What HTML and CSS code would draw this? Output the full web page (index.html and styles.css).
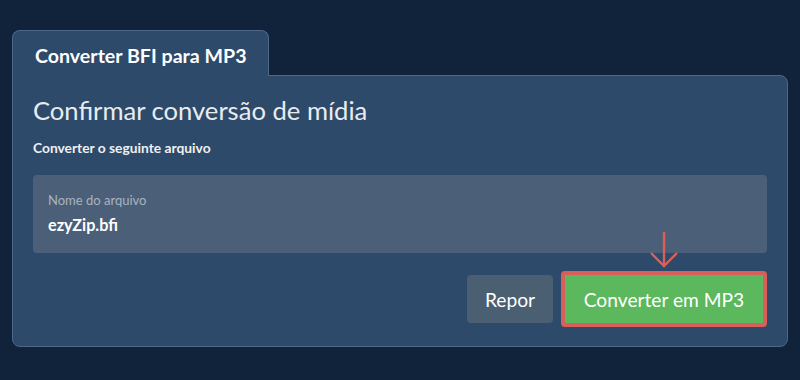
FILE: index.html
```html
<!DOCTYPE html>
<html lang="pt">
<head>
<meta charset="utf-8">
<link rel="stylesheet" href="styles.css">
</head>
<body>
<div class="wrap">
  <div class="tab">Converter BFI para MP3</div>
  <div class="panel">
    <h1 class="title">Confirmar conversão de mídia</h1>
    <p class="sub">Converter o seguinte arquivo</p>
    <div class="field">
      <div class="label">Nome do arquivo</div>
      <div class="value">ezyZip.bfi</div>
    </div>
    <div class="actions">
      <button class="btn reset">Repor</button>
      <div class="convert-wrap">
        <svg class="arrow" width="30" height="36" viewBox="0 0 30 36">
          <path d="M15 0 V34 M2 21 L15 34 L28 21" fill="none" stroke="#d9605a" stroke-width="2.4"/>
        </svg>
        <div class="highlight"><button class="btn convert">Converter em MP3</button></div>
      </div>
    </div>
  </div>
</div>
</body>
</html>
```

FILE: styles.css
```css
html, body { margin: 0; padding: 0; }
body {
  background: #10233a;
  font-family: Lato, "Open Sans", sans-serif;
  width: 800px; height: 380px; overflow: hidden;
}
.wrap { padding: 30px 12px 0 12px; }
.tab {
  width: 257px;
  height: 46px;
  box-sizing: border-box;
  background: #2d4a6a;
  border: 1px solid #4d6888;
  border-bottom: none;
  border-radius: 8px 8px 0 0;
  color: #fff;
  font-weight: 700;
  font-size: 19.6px;
  padding: 14px 0 0 22px;
  line-height: 22px;
  position: relative;
  z-index: 1;
  margin-bottom: -1px;
}
.panel {
  width: 776px;
  height: 272px;
  box-sizing: border-box;
  background: #2d4a6a;
  border: 1px solid #4d6888;
  border-radius: 0 8px 8px 8px;
  padding: 0 20px 0 20px;
  display: flex; flex-direction: column;
}
.title {
  margin: 19px 0 0 0;
  font-weight: 400;
  font-size: 25.6px;
  line-height: 30px;
  color: #e9ecef;
}
.sub {
  margin: 14px 0 0 0;
  font-weight: 700;
  font-size: 13.8px;
  line-height: 18px;
  color: #eef0f2;
}
.field {
  margin-top: 18px;
  height: 78px;
  box-sizing: border-box;
  background: #4b6078;
  border-radius: 4px;
  padding: 17px 15px 0 15px;
}
.label { font-size: 13px; line-height: 16px; color: #a8b3c0; }
.value { margin-top: 7px; font-size: 16.2px; font-weight: 700; color: #fff; line-height: 20px; }
.actions {
  display: flex; justify-content: flex-end; align-items: flex-end;
  gap: 8px;
  margin-top: -21px;
}
.btn {
  font-family: Lato, "Open Sans", sans-serif;
  font-size: 19.2px;
  font-weight: 400;
  color: #fff;
  border: none;
  border-radius: 4px;
  cursor: pointer;
}
.reset {
  background: #4b5f73;
  width: 86px; height: 48px;
  margin-bottom: 4px;
}
.convert-wrap { display: flex; flex-direction: column; align-items: center; }
.arrow { display: block; margin-bottom: 3px; }
.highlight {
  border: 4px solid #d9605a;
  border-radius: 4px;
  background: #d9605a;
}
.convert {
  background: #5cb85c;
  width: 198px; height: 48px;
  border-radius: 0;
  display: block;
}
```
